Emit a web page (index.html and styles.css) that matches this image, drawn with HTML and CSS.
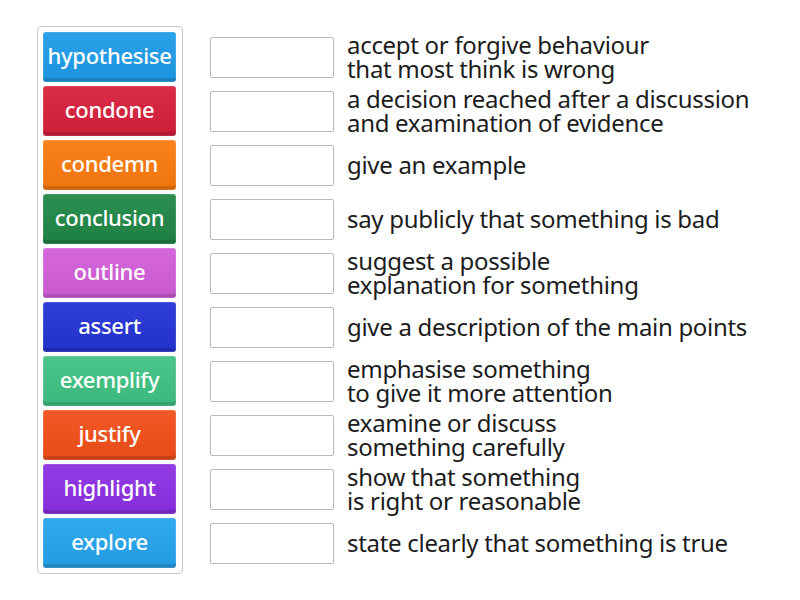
FILE: index.html
```html
<!DOCTYPE html>
<html lang="en">
<head>
<meta charset="utf-8">
<title>Match up</title>
<link rel="stylesheet" href="styles.css">
</head>
<body>
<div class="page">
  <div class="bank">
    <div class="tile c-blue">hypothesise</div>
    <div class="tile c-red">condone</div>
    <div class="tile c-orange">condemn</div>
    <div class="tile c-green">conclusion</div>
    <div class="tile c-pink">outline</div>
    <div class="tile c-navy">assert</div>
    <div class="tile c-mint">exemplify</div>
    <div class="tile c-vermil">justify</div>
    <div class="tile c-purple">highlight</div>
    <div class="tile c-sky">explore</div>
  </div>
  <div class="rows">
    <div class="row"><div class="slot"></div><div class="def">accept or forgive behaviour<br>that most think is wrong</div></div>
    <div class="row"><div class="slot"></div><div class="def">a decision reached after a discussion<br>and examination of evidence</div></div>
    <div class="row"><div class="slot"></div><div class="def">give an example</div></div>
    <div class="row"><div class="slot"></div><div class="def">say publicly that something is bad</div></div>
    <div class="row"><div class="slot"></div><div class="def">suggest a possible<br>explanation for something</div></div>
    <div class="row"><div class="slot"></div><div class="def">give a description of the main points</div></div>
    <div class="row"><div class="slot"></div><div class="def">emphasise something<br>to give it more attention</div></div>
    <div class="row"><div class="slot"></div><div class="def">examine or discuss<br>something carefully</div></div>
    <div class="row"><div class="slot"></div><div class="def">show that something<br>is right or reasonable</div></div>
    <div class="row"><div class="slot"></div><div class="def">state clearly that something is true</div></div>
  </div>
</div>
</body>
</html>
```
FILE: styles.css
```css
html, body {
  margin: 0;
  padding: 0;
  background: #ffffff;
}
body {
  font-family: "Noto Sans", "Open Sans", sans-serif;
  color: #1c1c1c;
}
.page {
  display: flex;
  align-items: flex-start;
  padding: 26px 0 0 37px;
}
.bank {
  display: flex;
  flex-direction: column;
  gap: 4px;
  padding: 5px 6px 5px 5px;
  border: 1px solid #c9c9c9;
  border-radius: 4px;
}
.tile {
  box-sizing: border-box;
  width: 133px;
  height: 50px;
  border-radius: 3px;
  display: flex;
  align-items: center;
  justify-content: center;
  padding-bottom: 4px;
  color: #ffffff;
  font-size: 22px;
  font-weight: 500;
  letter-spacing: -0.3px;
  white-space: nowrap;
  box-shadow: inset 0 -4px 0 rgba(0,0,0,0.13), inset 0 0 0 1px rgba(255,255,255,0.12);
  background-image: linear-gradient(rgba(255,255,255,0.06), rgba(0,0,0,0.05));
}
.c-blue { background-color: #1d9be8; }
.c-red { background-color: #d81f3c; }
.c-orange { background-color: #fb7a0e; }
.c-green { background-color: #1f8746; }
.c-pink { background-color: #d25ed9; }
.c-navy { background-color: #2333d4; }
.c-mint { background-color: #3fc283; }
.c-vermil { background-color: #f24e18; }
.c-purple { background-color: #8b2fe4; }
.c-sky { background-color: #24a4ee; }
.rows {
  display: flex;
  flex-direction: column;
  gap: 4px;
  margin-top: 6px;
  margin-left: 27px;
}
.row {
  height: 50px;
  display: flex;
  align-items: center;
  gap: 13px;
}
.slot {
  box-sizing: border-box;
  width: 124px;
  height: 41px;
  border: 1px solid #b9b9b9;
  border-radius: 2px;
  background: #fff;
}
.def {
  font-size: 24px;
  line-height: 24px;
  letter-spacing: -0.3px;
  white-space: nowrap;
}
```
